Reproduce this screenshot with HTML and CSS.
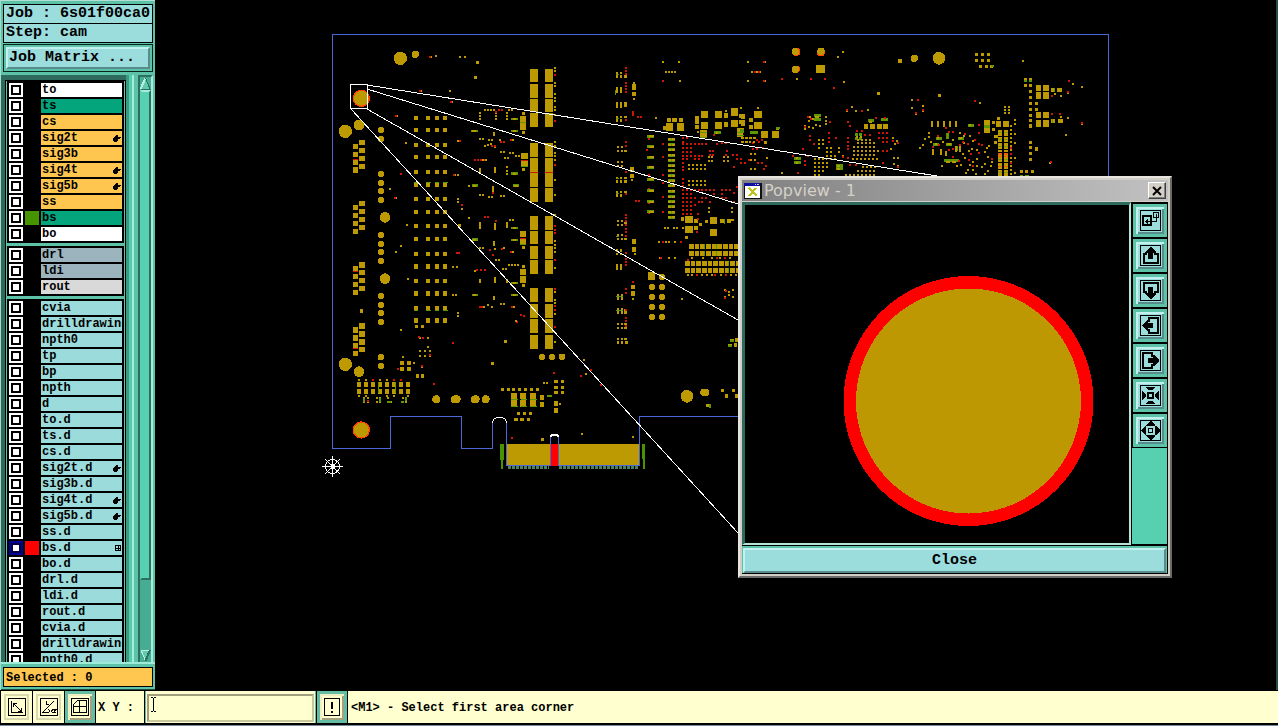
FILE: index.html
```html
<!DOCTYPE html>
<html lang="en">
<head>
<meta charset="utf-8">
<title>6s01f00ca0 - cam</title>
<link rel="stylesheet" href="styles.css">
</head>
<body>
<svg class="defs" aria-hidden="true">
  <symbol id="hand" viewBox="0 0 8 7"><path d="M3 0h2v1H3zM2 1h3v1H2zM1 2h7v1H1zM0 3h7v1H0zM0 4h5v1H0zM0 5h5v1H0zM1 6h3v1H1z"/></symbol>
  <symbol id="grid" viewBox="0 0 6 6"><path d="M.5.5h5v5h-5zM3 0v6M0 3h6" fill="none" stroke="#000"/></symbol>
</svg>
<div class="workspace">
  <aside class="sidebar">
    <div class="info">
      <div class="info-box">Job : 6s01f00ca0</div>
      <div class="info-box">Step: cam</div>
    </div>
    <div class="matrix"><button type="button" class="matrix-button">Job Matrix ...</button></div>
    <div class="browser">
      <div class="layers">
        <ul class="group">
          <li class="row white"><input type="checkbox" id="a1"><span class="swatch"></span><label for="a1">to</label></li>
          <li class="row green"><input type="checkbox" id="a2"><span class="swatch"></span><label for="a2">ts</label></li>
          <li class="row orange"><input type="checkbox" id="a3"><span class="swatch"></span><label for="a3">cs</label></li>
          <li class="row orange"><input type="checkbox" id="a4"><span class="swatch"></span><label for="a4">sig2t<svg class="hand"><use href="#hand"/></svg></label></li>
          <li class="row orange"><input type="checkbox" id="a5"><span class="swatch"></span><label for="a5">sig3b</label></li>
          <li class="row orange"><input type="checkbox" id="a6"><span class="swatch"></span><label for="a6">sig4t<svg class="hand"><use href="#hand"/></svg></label></li>
          <li class="row orange"><input type="checkbox" id="a7"><span class="swatch"></span><label for="a7">sig5b<svg class="hand"><use href="#hand"/></svg></label></li>
          <li class="row orange"><input type="checkbox" id="a8"><span class="swatch"></span><label for="a8">ss</label></li>
          <li class="row green"><input type="checkbox" id="a9"><span class="swatch lime"></span><label for="a9">bs</label></li>
          <li class="row white"><input type="checkbox" id="a10"><span class="swatch"></span><label for="a10">bo</label></li>
        </ul>
        <ul class="group">
          <li class="row slate"><input type="checkbox" id="b1"><span class="swatch"></span><label for="b1">drl</label></li>
          <li class="row slate"><input type="checkbox" id="b2"><span class="swatch"></span><label for="b2">ldi</label></li>
          <li class="row grey"><input type="checkbox" id="b3"><span class="swatch"></span><label for="b3">rout</label></li>
        </ul>
        <ul class="group">
          <li class="row"><input type="checkbox" id="c1"><span class="swatch"></span><label for="c1">cvia</label></li>
          <li class="row"><input type="checkbox" id="c2"><span class="swatch"></span><label for="c2">drilldrawing</label></li>
          <li class="row"><input type="checkbox" id="c3"><span class="swatch"></span><label for="c3">npth0</label></li>
          <li class="row"><input type="checkbox" id="c4"><span class="swatch"></span><label for="c4">tp</label></li>
          <li class="row"><input type="checkbox" id="c5"><span class="swatch"></span><label for="c5">bp</label></li>
          <li class="row"><input type="checkbox" id="c6"><span class="swatch"></span><label for="c6">npth</label></li>
          <li class="row"><input type="checkbox" id="c7"><span class="swatch"></span><label for="c7">d</label></li>
          <li class="row"><input type="checkbox" id="c8"><span class="swatch"></span><label for="c8">to.d</label></li>
          <li class="row"><input type="checkbox" id="c9"><span class="swatch"></span><label for="c9">ts.d</label></li>
          <li class="row"><input type="checkbox" id="c10"><span class="swatch"></span><label for="c10">cs.d</label></li>
          <li class="row"><input type="checkbox" id="c11"><span class="swatch"></span><label for="c11">sig2t.d<svg class="hand"><use href="#hand"/></svg></label></li>
          <li class="row"><input type="checkbox" id="c12"><span class="swatch"></span><label for="c12">sig3b.d</label></li>
          <li class="row"><input type="checkbox" id="c13"><span class="swatch"></span><label for="c13">sig4t.d<svg class="hand"><use href="#hand"/></svg></label></li>
          <li class="row"><input type="checkbox" id="c14"><span class="swatch"></span><label for="c14">sig5b.d<svg class="hand"><use href="#hand"/></svg></label></li>
          <li class="row"><input type="checkbox" id="c15"><span class="swatch"></span><label for="c15">ss.d</label></li>
          <li class="row"><input type="checkbox" id="c16" checked><span class="swatch red"></span><label for="c16">bs.d<svg class="mark"><use href="#grid"/></svg></label></li>
          <li class="row"><input type="checkbox" id="c17"><span class="swatch"></span><label for="c17">bo.d</label></li>
          <li class="row"><input type="checkbox" id="c18"><span class="swatch"></span><label for="c18">drl.d</label></li>
          <li class="row"><input type="checkbox" id="c19"><span class="swatch"></span><label for="c19">ldi.d</label></li>
          <li class="row"><input type="checkbox" id="c20"><span class="swatch"></span><label for="c20">rout.d</label></li>
          <li class="row"><input type="checkbox" id="c21"><span class="swatch"></span><label for="c21">cvia.d</label></li>
          <li class="row"><input type="checkbox" id="c22"><span class="swatch"></span><label for="c22">drilldrawing</label></li>
          <li class="row"><input type="checkbox" id="c23"><span class="swatch"></span><label for="c23">npth0.d</label></li>
        </ul>
      </div>
      <div class="rail"></div>
      <div class="scrollbar">
        <button type="button" class="arrow" aria-label="Scroll up"><svg viewBox="0 0 11 13"><path d="M5.5 1 .5 12.500h10z" fill="#62c9ad"/><path d="M5.500 1 .5 12" stroke="#b4f3e4" fill="none" stroke-width="2"/><path d="M5.500 1 10 12H1" stroke="#2d6f5e" fill="none" stroke-width="1"/></svg></button>
        <div class="thumb"></div>
        <div class="trough"></div>
        <button type="button" class="arrow" aria-label="Scroll down"><svg viewBox="0 0 11 13"><path d="M.5 1h10l-5 11z" fill="#62c9ad"/><path d="M10 1H1l4.500 11" stroke="#b4f3e4" fill="none" stroke-width="1"/><path d="M10 1 5.500 12" stroke="#2d6f5e" fill="none" stroke-width="2"/></svg></button>
      </div>
    </div>
    <div class="selected"><div class="selected-box">Selected : 0</div></div>
  </aside>

  <main class="canvas">
    <svg class="board" width="1123" height="690" viewBox="155 0 1123 690" role="img" aria-label="Board view">
      <!-- upper left quarter, drawn at three units per pixel -->
      <g class="pads" transform="translate(320 25) scale(.33333)">
        <circle class="gold" cx="241" cy="100" r="20"/><circle class="gold" cx="286" cy="88" r="11"/>
        <circle class="hot" cx="124" cy="220" r="26"/><circle class="gold" cx="124" cy="220" r="22"/>
        <circle class="gold" cx="76" cy="319" r="20"/><circle class="gold" cx="117" cy="300" r="16"/><circle class="gold" cx="195" cy="577" r="16"/>
        <path class="w24" d="M642 132V171M642 177V219M642 222V262M642 265V305M642 354V396M642 399V441M642 445V485M642 489V530M642 573V615M642 618V657M642 663V702M642 705V746M642 789V831M642 837V879M642 882V924M642 930V971M687 132V171M687 177V219M687 222V262M687 265V305M687 354V396M687 399V441M687 445V485M687 489V530M687 573V615M687 618V657M687 663V702M687 705V746M687 789V831M687 837V879M687 882V924M687 930V971"/>
        <path class="red w3" d="M630 444h24m21 0h24"/>
        <path id="col" class="w13" d="M288 279h0M288 316h0M288 360h0M288 397h0M288 442h0M288 479h0M288 523h0M288 561h0M288 604h0M288 642h0M288 687h0M288 725h0M288 768h0M288 806h0M288 850h0M288 887h0"/>
        <use href="#col" x="37"/><use href="#col" x="63"/><use href="#col" x="88"/>
        <path class="green w3" d="M281 473h14m23 0h14m12 0h14m12 0h14M281 856h14m23 0h14m12 0h14m12 0h14"/>
        <path class="w19 rnd" d="M183 315h0M183 342h0M183 447h0M183 474h0M183 498h0M183 525h0M183 630h0M183 657h0M183 681h0M183 708h0M183 813h0M183 840h0M183 864h0M183 891h0M183 997h0M183 1023h0"/>
        <path class="w16" d="M126 353h0M126 377h0M126 401h0M126 424h0M107 364h0M107 388h0M107 412h0M107 435h0M126 536h0M126 560h0M126 584h0M126 608h0M107 548h0M107 572h0M107 596h0M107 619h0M126 720h0M126 742h0M126 766h0M126 790h0M107 731h0M107 754h0M107 778h0M107 802h0M126 903h0M126 927h0M126 951h0M126 973h0M107 915h0M107 939h0M107 962h0M107 985h0"/>
        <path class="red w3" d="M99 403h15M99 739h15M99 970h15"/>
        <path class="w10" d="M472 112h0M466 157h0M124 858h0M610 266h0M610 322h0M610 434h0M419 602h0M556 949h0M517 1015h0M610 667h0M610 725h0M610 781h0"/>
        <path class="w6" d="M333 96h0M348 93h0M420 96h0M435 96h0M303 198h0M390 198h0M395 232h0M230 272h0M258 354h0M210 492h0M228 519h0M261 600h0M243 663h0M228 681h0M264 762h0M243 915h0M480 265h0M480 274h0M480 283h0M495 255h0M504 255h0M513 255h0M522 255h0M528 263h0M528 272h0M528 283h0M560 265h0M560 274h0M560 283h0M567 255h0M576 255h0M480 342h0M490 343h0M508 345h0M517 345h0M539 346h0M495 363h0M505 361h0M514 357h0M524 366h0M543 381h0M551 381h0M569 384h0M578 384h0M588 393h0M597 393h0M555 399h0M565 399h0M480 511h0M489 511h0M508 516h0M517 516h0M543 513h0M551 513h0M413 348h0M405 450h0M414 450h0M414 522h0M414 531h0M425 551h0M447 483h0M447 579h0M561 427h0M561 437h0M561 446h0M399 726h0M411 726h0M399 810h0M408 810h0M414 864h0M414 873h0M567 720h0M576 720h0M585 720h0M594 720h0M549 732h0M558 732h0M528 705h0M537 705h0M543 837h0M552 837h0M480 669h0M489 669h0M570 584h0M579 584h0M505 841h0M516 847h0"/>
        <path class="w6" d="M705 129h0M705 138h0M705 174h0M705 183h0M705 207h0M705 219h0M705 228h0M705 246h0M705 255h0M705 270h0M705 351h0M705 363h0M705 384h0M705 393h0M705 405h0M705 465h0M705 510h0M705 570h0M705 648h0M705 660h0M705 670h0M705 681h0M705 729h0M705 801h0M705 825h0M705 835h0M705 868h0M705 951h0"/>
        <path class="w6 red" d="M330 96h0M299 198h0M393 230h0M227 272h0M243 447h0M224 519h0M420 348h0M402 450h0M705 151h0M705 289h0M705 421h0M705 603h0M705 615h0M705 624h0M705 705h0M705 792h0M705 843h0M705 855h0M705 906h0M537 254h0M546 254h0M529 260h0M543 350h0M551 350h0M516 363h0M524 363h0M466 405h0M475 405h0M484 405h0M494 405h0M518 503h0M425 541h0M495 576h0M504 577h0M528 588h0M412 684h0M418 685h0M399 955h0M342 1077h0M470 735h0M482 735h0M495 735h0M510 674h0M518 690h0M547 672h0M572 681h0M480 846h0M487 846h0M575 846h0M604 870h0M612 872h0M590 892h0M573 345h0"/>
        <path class="w6" d="M480 431v12M526 429v12M522 323v8M519 487v10M480 593v16M526 597v14M560 593v14M521 650v10M480 764v8M526 759v12M560 764v8M521 815v8M553 670h0M578 345h0M498 405h0M488 405h0M466 737h0M524 673h0M580 681h0M492 846h0M582 846h0M588 888h0"/>
        <path class="w8 green" d="M456 319h14M578 283h12M578 319h12M459 482h12M582 482h12M578 446h12M459 644h12M578 610h12M578 645h12M578 775h12M578 810h12M459 811h12"/>
        <path class="w6" d="M460 319h4M582 283h4M582 319h4M462 482h4M586 482h4M582 446h4M462 644h4M582 610h4M582 645h4M582 775h4M582 810h4M462 811h4"/>
        <path class="w18" d="M601 283h17M601 305h17M604 393h19M604 415h19M601 627h17M601 650h17M601 741h17M601 764h17"/>
        <path class="w3 red" d="M604 406h19M601 641h17"/><path class="w3 green" d="M601 294h17M604 425h19M601 659h17"/>
      </g>
      <!-- lower left -->
      <g class="pads" transform="translate(320 200) scale(.33333)">
        <circle class="gold" cx="195" cy="52" r="16"/><circle class="gold" cx="195" cy="236" r="16"/>
        <circle class="gold" cx="76" cy="493" r="20"/><circle class="gold" cx="117" cy="515" r="16"/>
        <circle class="hot" cx="124" cy="690" r="26"/><circle class="gold" cx="124" cy="690" r="22"/>
        <path class="w24 rnd" d="M349 598h0M405 598h5M465 598h2M497 598h0"/><path class="w19 rnd" d="M666 471h0M696 471h0M726 471h0"/>
        <path class="w12" d="M117 552v3m0 18v3M138 552v3m0 18v3M159 552v3m0 18v3M180 552v3m0 18v3M201 552v3m0 18v3M222 552v3m0 18v3M243 552v3m0 18v3M264 552v3m0 18v3"/>
        <path class="w12" d="M246 490h1M267 490h0M246 507h1M267 507h0M666 592v2M666 613v2M708 609v4M708 631v2"/>
        <path class="w10" d="M290 379h0M307 379h0M292 528h0M307 528h0M547 568h0M565 568h0M581 568h0M599 568h0M616 568h0M634 568h0M652 568h0M595 640h0M613 640h0M631 640h0M588 658h0M606 658h0M625 658h0M708 544h0M727 544h0M708 562h0M727 562h0M708 577h0M727 577h0M667 718h0"/>
        <path class="w19" d="M574 588h18M601 588h18M629 588h18M574 611h18M601 611h18M629 611h18"/>
        <path class="w3 green" d="M574 599h20m8 0h20m8 0h20M574 620h20m8 0h20m8 0h20M175 546v34M228 546v34"/>
        <path class="w6" d="M117 541h0M138 539h0M180 541h0M201 539h0M117 588h0M138 588h0M201 588h0M222 588h0M264 588h0M132 595h0M132 605h0M144 595h0M144 605h0M171 595h0M180 595h0M171 605h0M180 605h0M205 595h0M213 605h0M250 595h0M258 605h0M249 471h0M282 489h0M300 414h0M324 414h0M324 441h0M300 453h0M315 453h0M330 453h0M300 468h0M315 468h0M330 468h0M306 500h0M672 549h0M681 549h0M719 612h0"/>
        <path class="w6 red" d="M297 411h0M309 413h0M159 539h0M222 541h0M243 539h0M234 508h0M576 714h0M702 520h0M306 497h0M330 466h0M144 603h0"/>
        <path class="w6 green" d="M205 605h6M246 605h4M132 597v6M180 597v6M258 595v6M685 587h8"/>
      </g>
      <!-- middle column and the region left of the pop-up -->
      <g class="pads" transform="translate(560 30) scale(.33333)">
        <path class="w7" d="M172 129h0M172 140h0M184 129h0M184 140h0M172 175v10M184 175v10M172 219v12M184 219v12M172 261h0M184 261h0M172 272h0M184 272h0M197 261h0M197 140h0M197 219v8M174 351h0M186 351h0M174 363h0M186 363h0M197 363h0M174 396h0M186 396h0M174 408h0M186 408h0M172 444h0M184 444h0M197 444h0M172 455h0M184 455h0M197 455h0M172 486h0M184 486h0M172 497h0M184 497h0M197 486h0M174 573h0M186 573h0M174 585h0M186 585h0M197 579h0M174 615h0M186 615h0M174 627h0M186 627h0M197 627h0M172 662h0M184 662h0M172 672h0M184 672h0M172 706v10M184 706v10M174 796v10M186 796v10M174 838v10M186 838v10M197 840v8M174 882h0M186 882h0M197 882h0M174 894h0M186 894h0M197 894h0M174 927h0M186 927h0M197 927h0M174 938h0M186 938h0M200 938h0"/>
        <path class="w6 red" d="M197 114h0M197 123h0M197 132h0M197 159h0M197 168h0M197 177h0M197 186h0M197 270h0M219 246v8M234 261h0M243 261h0M197 337h0M197 347h0M197 427h0M197 492h0M228 513h0M237 513h0M197 556h0M197 565h0M197 573h0M197 585h0M197 596h0M197 606h0M197 617h0M197 668h0M197 688h0M197 697h0M197 706h0M219 757h0M197 777h0M197 790h0M197 841h0M197 865h0M197 874h0M197 888h0M310 153h0M267 326h0M309 342h0M261 359h0M264 380h0M309 380h0M309 436h0M309 460h0M309 500h0M309 545h0M267 436h0M267 478h0M267 520h0M267 550h0"/>
        <path class="w3 green" d="M168 134h10M168 180v14M168 266h10M168 447h10M168 490h10M168 620h10M168 800h20M168 842h20"/>
        <path class="w12" d="M222 169v5M222 191v1M217 417v2M217 437v2M223 634v2M223 656v3M219 770v2M219 790v2"/>
        <path class="w6" d="M222 160h0M222 207h0M216 449h0M225 672h0M219 806h0M288 264h0M309 96h0M357 96h0M360 153h0M318 126h0M327 126h0M336 126h0M345 126h0M564 96h0M564 153h0M576 126h0M315 594h0M324 594h0M342 594h0M351 594h0M368 594h0M377 594h0M297 636h0M318 636h0M327 636h0M345 636h0M300 684h0M327 684h0M345 684h0M366 807h0M72 990h0M78 1032h0M63 1037h0M66 1212h0M219 1221h0M517 569h0"/>
        <path class="w9 green" d="M266 319h12M266 350h12M266 382h12M266 412h12M266 448h12M266 482h12M266 515h12M266 545h12M467 308h12M577 308h12"/>
        <path class="w6" d="M270 319h8M270 350h8M270 382h8M270 412h8M270 448h8M270 482h8M270 515h8M270 545h8M470 308h0M580 308h0"/>
        <path class="w9 green" d="M328 328h13M328 344h13M328 360h13M328 376h13M328 391h13M328 407h13M328 422h13M328 437h13M328 453h13M328 468h13M328 484h13M328 500h13M328 516h13M328 531h13M328 547h13M328 562h13"/>
        <path class="w6" d="M328 328h2m8 0h4M328 344h2m8 0h4M328 360h2m8 0h4M328 376h2m8 0h4M328 391h2m8 0h4M328 407h2m8 0h4M328 422h2m8 0h4M328 437h2m8 0h4M328 453h2m8 0h4M328 468h2m8 0h4M328 484h2m8 0h4M328 500h2m8 0h4M328 516h2m8 0h4M328 531h2m8 0h4M328 547h2m8 0h4M328 562h2m8 0h4"/>
        <path class="w20" d="M329 289v3M362 289v3M433 253h1M433 286h1M475 253h1M475 286h1M525 246v3M525 280v1M592 253v2M592 286h1M386 569h3M386 600h3M460 573h1M460 607h1"/>
        <path class="w12" d="M343 270h2M362 270h0M328 271h0M316 295h0M411 264h0M411 275h0M411 291h0M498 256v2M498 282v3M548 258v2M548 280v3M573 269h0M573 290h0M426 307h8M426 316h8M409 573h0M409 593h0M486 574h0M506 574h0M536 300h10M538 314h6"/>
        <path class="w10" d="M367 567h0M379 622h0M439 575h0M421 583h0"/><path class="w6" d="M498 243h0M543 235h0M594 235h0M413 307h0M519 569h0"/>
        <path class="w3 green" d="M420 308h20M420 322h20M530 308h22M530 316h22M495 567v14"/>
        <path class="red dots" d="M368 325h0M380 325h0M368 336h0M368 343h0M380 343h0M393 343h0M404 343h0M416 343h0M427 343h0M438 343h0M380 355h0M393 355h0M368 355h0M368 366h0M380 366h0M393 366h0M380 377h0M393 377h0M404 377h0M416 377h0M427 377h0M368 377h0M368 388h0M380 388h0M404 388h0M416 388h0M368 399h0M368 410h0M368 421h0M368 447h0M368 458h0M368 469h0M368 480h0M380 480h0M393 480h0M404 480h0M416 480h0M427 480h0M438 480h0M368 492h0M380 492h0M393 492h0M368 504h0M380 504h0M393 504h0M404 504h0M427 504h0M438 504h0M368 516h0M380 516h0M393 516h0M416 516h0M427 516h0M368 528h0M380 528h0M393 528h0M368 540h0M380 540h0M393 540h0M368 551h0M380 551h0M393 551h0M413 551h0M404 525h0M449 363h0M460 363h0M486 340h0M498 340h0M500 364h0M460 375h0M449 376h0M498 375h0M520 375h0M532 375h0M543 387h0M531 387h0M555 399h0M543 399h0M522 410h0M486 480h0M498 480h0M510 480h0M486 492h0M486 504h0M498 504h0M522 490h0M522 516h0M450 480h0M462 480h0M462 492h0M450 516h0M532 470h0M579 340h0M590 330h0M472 341h0M462 315h0M567 390h0M411 606h0M413 568h0M309 636h0M362 636h0M304 684h0"/>
        <path class="w6" d="M387 405h0M398 405h0M411 405h0M423 405h0M435 405h0M387 417h0M398 417h0M411 417h0M423 417h0M435 417h0M387 453h0M398 453h0M411 453h0M423 453h0M435 453h0M387 465h0M398 465h0M411 465h0M423 465h0M435 465h0M447 382h0M456 382h0M447 393h0M456 393h0M492 382h0M503 382h0M492 393h0M503 393h0M447 534h0M447 546h0M516 534h0M516 546h0M549 325h0M561 325h0M573 325h0M585 325h0M549 337h0M561 337h0M573 373h0M585 373h0M573 390h0M573 417h0M585 417h0"/>
        <path class="w14" stroke-dasharray="14 3" d="M387 649h147M387 671h147M375 701h159M375 721h159"/>
        <path class="w3 green" d="M435 642v14m0 8v14M470 642v14m0 8v14M506 695v13m0 6v14"/>
        <path class="w6" d="M383 736h0M395 736h0M425 736h0M440 736h0M455 736h0M482 736h0M513 736h0M528 736h0M397 684h0M430 684h0M456 684h0M480 684h0M510 684h0M495 780h0M507 785h0M519 780h0M495 800h0M507 796h0M519 800h0"/>
        <path class="w6 red" d="M410 736h0M465 736h0M498 736h0M384 691h0M470 684h0M495 684h0M497 782h0M495 803h0"/>
        <path class="w20" d="M274 738v2"/><path class="w19 rnd" d="M306 740h0M276 771h0M306 771h0M276 801h0M306 801h0M276 831h0M306 831h0M276 861h0M306 861h0M5 981h2"/>
        <circle class="gold" cx="381" cy="1099" r="19"/><path class="w22 rnd" d="M432 1087h5"/>
        <path class="w10" d="M487 1081h0M520 1081h0M499 1098h0M531 1098h0M443 1127h3M516 931h0M530 930h0M510 946h0M527 945h0M7 1054h0M7 1072h0M7 1087h0"/>
        <path class="w6 green" d="M451 1124v6M514 932h6M506 947h6"/><path class="w6 red" d="M94 1019h0M124 1064h0M63 1037h0"/>
      </g>
      <!-- upper right -->
      <g class="pads" transform="translate(740 30) scale(.33333)">
        <circle class="hot" cx="169" cy="66" r="12"/><circle class="gold" cx="166" cy="65" r="11"/><circle class="hot" cx="243" cy="67" r="12"/><circle class="gold" cx="243" cy="64" r="11"/><circle class="hot" cx="169" cy="118" r="11"/><circle class="gold" cx="166" cy="118" r="11"/>
        <path class="w24" d="M228 117h27"/><circle class="gold" cx="597" cy="85" r="19"/><circle class="gold" cx="523" cy="85" r="11"/><path class="w12" d="M479 93h1"/>
        <path class="w10" d="M709 73h0M727 73h0M745 73h0M709 91h0M727 91h0M745 91h0M721 109h0M739 109h0M755 109h0M415 190h0M598 196h0M856 150h0M871 150h0M856 166h0M871 166h0M871 184h0M871 202h0M871 220h0M889 220h0M871 238h0M889 238h0M871 256h0M871 271h0M871 288h0M871 337h0M871 352h0M889 357h0M871 370h0M871 388h0M844 424h0M860 424h0M877 424h0M775 265h0M760 277h0M760 298h0M768 320h0M766 337h0M76 337h0M113 295h0"/>
        <path class="w6 green" d="M755 109h4M854 152h4m11 0h4M110 295h6"/>
        <path class="w18" d="M888 174h15M909 174h18M888 197h15M909 197h18M888 256h15M909 256h18M888 281h15M909 281h18M732 279h18M732 300h18M768 282h15M789 282h17"/>
        <path class="w12" d="M939 180h1M957 180h3M939 273h1M960 273h2"/><path class="w4 green" d="M943 174v12M938 267v12M732 287h18M732 291h18"/>
        <path class="w22" d="M43 254h22M43 286h22M63 313h20M96 313h20"/><path class="w12" d="M3 259h5M3 276h5M33 270h0M33 290h0"/>
        <path class="w6" d="M24 96h0M24 153h0M75 96h0M75 153h0M36 126h0M51 127h0M60 127h0M294 81h0M309 66h0M171 147h0M312 156h0M849 93h0M999 162h0M1026 171h0M984 264h0M978 315h0M516 210h0M516 233h0M549 228h0M705 213h0M720 218h0M336 231h0M348 243h0M384 240h0M366 244h0M321 243h0M54 234h0M963 199h0M945 193h0M984 190h0M963 260h0M1026 283h0M528 251h0M548 244h0M209 261h0M219 268h0M207 272h0M195 288h0M195 298h0M207 290h0M219 295h0M228 285h0M240 289h0M258 262h0M258 272h0M258 283h0M126 429h0M81 384h0M931 398h0M795 232h0M807 232h0M795 241h0M807 241h0M795 250h0M807 250h0"/>
        <path class="w6 red" d="M72 97h0M72 153h0M45 127h0M57 127h0M127 147h0M214 147h0M256 147h0M283 174h0M988 153h0M984 187h0M960 252h0M935 252h0M1026 280h0M932 396h0M706 212h0M533 210h0M549 240h0M528 249h0M366 243h0M320 239h0M205 260h0M213 268h0M195 292h0M935 197h0M716 285h0"/>
        <path class="w9 green" d="M226 257h12M226 268h12M388 272h10M427 269h12M35 308h10M166 385h12M166 398h12M293 407h11M293 417h11M3 303h4M350 314h0M362 314h0M350 325h0M362 325h0M689 286h10M593 325h10M585 343h8M622 343h11M659 325h10M622 314v8M650 354v6M616 392h36"/>
        <path class="w6" d="M228 262h6M390 276h4M170 385h0M170 398h0M294 407h4M294 417h4M350 320h0M362 320h0M690 286h0M595 325h0M587 343h0M625 343h4M660 325h4M622 396h6M640 396h6"/>
        <path class="w14" d="M372 290h12M390 290h14M412 290h13M429 290h15"/>
        <path class="w6" d="M576 276v12M594 276v12M612 276v12M630 276v12M648 276v12M580 360v12M602 360v12M617 366v8M648 352v10M661 352v10"/>
        <path class="bars" d="M780 300v137M798 300v137"/>
        <path class="bars-green" d="M774 309h12m6 0h12M774 329h12m6 0h12M774 349h12m6 0h12M774 389h12m6 0h12M774 429h12m6 0h12"/>
        <path class="w4 hots" d="M774 372h12m6 0h12M774 380h12m6 0h12M774 410h12m6 0h12"/>
        <path class="dashes" d="M813 284v151M825 268v18M825 310v12M825 425v12"/>
        <path class="dashes" d="M222 387h38M222 399h42M222 411h42M222 423h30M222 435h18M258 354h18M258 366h18M258 378h30M270 386h18M340 352h66M340 364h78M340 376h66M336 386h78M350 340h54M350 330h42M366 411h42M350 423h54M316 435h90M234 330h18M234 342h18M234 354h6M295 354h6M295 366h6M307 378h6M3 324h43M3 336h43M30 373h18M30 390h18M30 417h18"/>
        <path class="red dots" d="M270 276h0M267 310h0M267 324h0M267 336h0M288 324h0M324 276h0M330 289h0M324 324h0M324 336h0M324 348h0M324 358h0M324 385h0M350 303h0M366 303h0M374 316h0M416 310h0M428 310h0M440 310h0M418 324h0M430 324h0M442 324h0M428 336h0M442 336h0M390 316h0M442 364h0M430 364h0M310 382h0M348 404h0M330 404h0M210 330h0M210 318h0M222 342h0M205 378h0M196 392h0M196 404h0M174 429h0M190 358h0M58 336h0M66 330h0M40 358h0M52 357h0M70 355h0M54 398h0M66 398h0M78 408h0M72 417h0M3 387h0M15 399h0M3 399h0M160 378h0M430 400h0M408 265h0M435 265h0"/>
        <path class="dots" d="M459 325h0M471 333h0M465 343h0M453 358h0M462 384h0M474 384h0M474 408h0M462 402h0M541 353h0M549 346h0M555 328h0M568 308h0M566 322h0M573 336h0M660 310h0M673 318h0M690 318h0M700 332h0M640 330h0M610 336h0M672 340h0M668 372h0M676 384h0M687 364h0M697 357h0M712 360h0M735 366h0M741 354h0M747 348h0M744 380h0M712 386h0M700 396h0M690 404h0M727 412h0M735 402h0M757 396h0M753 408h0M710 408h0M700 420h0M684 420h0M678 429h0M708 433h0M734 432h0M744 422h0M606 408h0M652 408h0M664 404h0M824 385h0M824 340h0"/>
        <path class="red dots" d="M618 295h0M626 307h0M640 306h0M595 318h0M668 337h0M684 342h0M705 330h0M718 310h0M717 342h0M725 345h0M675 313h0M660 346h0M640 356h0M626 360h0M640 380h0M694 372h0M718 368h0M657 394h0M688 390h0M757 388h0M700 408h0M813 355h0M813 372h0M813 400h0M474 338h0M460 332h0M474 410h0M598 345h0M580 350h0"/>
        <path class="w4 green" d="M840 437h8m8 0h10"/>
      </g>

      <!-- card edge -->
      <path fill="#be9a02" d="M507 444h132v21H507z"/><path fill="#f00" d="M551 444h7v22h-7z"/>
      <path fill="#489400" d="M500 444h4v16h-1v9h-2v-9h-1zM642 444h3v25h-2v-10h-1z"/>
      <path d="M508 467.500h41M559 467.500h80" stroke="#4a8263" stroke-width="3" stroke-dasharray="3 1"/>
      <path class="outline" d="M332.500 448V34.500H1108.500V416.500H639.500V465.500H558.500V436M550.500 436V465.500H506.500V423M492.500 423V448.500H461.500V416.500H390.500V448.500H332"/>
      <path class="trace" stroke-width="1" d="M492.500 423C493 415 506 415 506.500 423"/><path class="trace" stroke-width="2" d="M551 437c0-3 7-3 7 0"/>
      <path class="trace" d="M350.500 84.500h17v24h-17zM367 85 937 176M367 89 738 204M367 109 738 320M351 109 738 533"/>
      <g class="trace"><circle cx="332.500" cy="466.500" r="7"/><path d="M322 466.500h21M332.500 456v21M325 459l15 15M340 459l-15 15"/><path d="M330.500 466.500h4M332.500 464v5" stroke-width="3"/></g>
    </svg>

    <section class="popview" aria-label="Popview - 1">
      <header class="title">
        <svg class="app" viewBox="0 0 18 16"><path fill="#111" d="M0 0h18v16H0z"/><path fill="#fff" d="M1 3h15v12H1z"/><path fill="#1010a0" d="M0 0h16v3H0z"/><path fill="#ccc" d="M11 1h1v1h-1zM13 1h2v1h-2z"/><path d="M5 5l8 8M12 5l-7 8" stroke="#bcc418" stroke-width="2"/></svg>
        <h1>Popview - 1</h1>
        <button type="button" class="close-x" aria-label="Close window"><svg viewBox="0 0 10 10"><path d="M1 1l8 8M9 1L1 9" stroke="#000" stroke-width="2"/></svg></button>
      </header>
      <div class="pop-body">
        <div class="view"><svg viewBox="0 0 384 338" role="img" aria-label="Magnified pad"><circle cx="223.500" cy="196" r="125" fill="#f00"/><circle cx="223.500" cy="196" r="112.500" fill="#be9802"/></svg></div>
        <div class="tools">
          <button type="button" aria-label="Copy view"><svg viewBox="0 0 21 21"><path class="f" d="M.5.5h20v20H.5z"/><path class="b" d="M3 6h8v9H3z"/><path class="f" d="M13.500 2.500h5v5h-5zM15.500 4.500h1v7H5M7.500 9v5M6.500 10v3"/></svg></button>
          <button type="button" aria-label="Pan up"><svg viewBox="0 0 21 21"><path class="f" d="M.5.5h20v20H.5z"/><path class="b" d="M7 9H4v9h14V9h-4"/><path d="M10 2h1l5 5v1h-3v6H8V8H5V7z"/></svg></button>
          <button type="button" aria-label="Pan down"><svg viewBox="0 0 21 21"><path class="f" d="M.5.5h20v20H.5z"/><path class="b" d="M7 12H4V3h14v9h-4"/><path d="M10 19h1l5-5v-1h-3V7H8v6H5v1z"/></svg></button>
          <button type="button" aria-label="Pan left"><svg viewBox="0 0 21 21"><path class="f" d="M.5.5h20v20H.5z"/><path class="b" d="M9 7V3h9v15H9v-4"/><path d="M2 10v1l5 5h1v-3h5V8H8V5H7z"/></svg></button>
          <button type="button" aria-label="Pan right"><svg viewBox="0 0 21 21"><path class="f" d="M.5.5h20v20H.5z"/><path class="b" d="M12 7V3H3v15h9v-4"/><path d="M19 10v1l-5 5h-1v-3H8V8h5V5h1z"/></svg></button>
          <button type="button" aria-label="Zoom in"><svg viewBox="0 0 21 21"><path class="f" d="M.5.5h20v20H.5z"/><path class="b" d="M8 8h5v5H8z"/><path d="M5 2h11l-4 3h-3zM5 19h11l-4-3h-3zM2 5v11l4-5v-1zM19 5v11l-4-5v-1z"/></svg></button>
          <button type="button" aria-label="Zoom out"><svg viewBox="0 0 21 21"><path class="f" d="M.5.5h20v20H.5zM8.500 8.500h4v4h-4z"/><path d="M10 1h1l4 4v1H6V5zM10 20h1l4-4v-1H6v1zM1 10v1l4 4h1V6H5zM20 10v1l-4 4h-1V6h1z"/></svg></button>
        </div>
      </div>
      <div class="pop-foot"><button type="button" class="close">Close</button></div>
    </section>
  </main>
</div>

<footer class="status">
  <button type="button" class="tool" aria-label="Snap"><svg viewBox="0 0 18 18"><path class="f" d="M.5.5h17v17H.5zM3.500 3v11.500H15M5 5l9 9M5.500 9V5.500H9M13.500 10v3.500H10"/></svg></button>
  <button type="button" class="tool" aria-label="Angle"><svg viewBox="0 0 18 18"><path class="f" d="M.5.5h17v17H.5zM2 14.500h7M3 14 14 3M6.500 3v3h2M7.500 11c2 0 2 2 1.500 3M15.500 11.500h-2l-2 1v1l1 1h1l3-3M14 12l1 2.500h1"/></svg></button>
  <button type="button" class="tool framed" aria-label="Grid"><svg viewBox="0 0 18 18"><path class="f" d="M.5.5h17v17H.5zM6.500 2.500h9v12h-13v-8zM2 8.500h14M8.500 2v13"/></svg></button>
  <label class="xy" for="xy">X Y :</label>
  <div class="entry"><input type="text" id="xy"><svg class="ibeam" viewBox="0 0 7 15"><path class="f" d="M1 .5h2M4 .5h2M3.500 1v13M1 14.500h2M4 14.500h2"/></svg></div>
  <button type="button" class="tool framed" aria-label="Interrupt"><svg viewBox="0 0 18 18"><path class="f" d="M1.500.5h15v17h-15z"/><path d="M8 4h2v7H8zM8 13h2v2H8z"/></svg></button>
  <output class="message">&lt;M1&gt; - Select first area corner</output>
</footer>
</body>
</html>
```
FILE: styles.css
```css
* { box-sizing: border-box; }
body {
  margin: 0;
  height: 100vh;
  display: flex;
  flex-direction: column;
  overflow: hidden;
  background: #000;
  color: #000;
  font: bold 12px/14px "Liberation Mono", monospace;
}
button, input { font: inherit; color: inherit; border-radius: 0; }
button { margin: 0; padding: 0; }
svg { display: block; shape-rendering: crispEdges; }
.defs { position: absolute; width: 0; height: 0; }
.f { fill: none; stroke: #000; stroke-width: 1; }
.b { fill: none; stroke: #000; stroke-width: 2; }

.workspace { flex: 1; min-height: 0; display: flex; }

/* sidebar */
.sidebar {
  flex: none;
  width: 155px;
  display: flex;
  flex-direction: column;
  background: #5cc3a8;
  border-top: 1px solid #b5ded5;
  border-left: 1px solid #9fdccc;
}
.info { padding: 3px 2px 0; font-size: 15px; line-height: 18px; }
.info-box { height: 20px; padding-left: 2px; white-space: nowrap; background: #9bdcdc; border: 1px solid #000; }
.info-box + .info-box { margin-top: -1px; }
.matrix { margin: 1px 2px 0; padding: 2px; border: 1px solid #06251d; }
.matrix-button {
  display: block;
  width: 100%;
  height: 22px;
  padding-left: 1px;
  font-size: 15px;
  text-align: left;
  white-space: nowrap;
  background: #9bdcdc;
  border: 2px solid;
  border-color: #c3f1f0 #588b8b #588b8b #c3f1f0;
}
.browser { flex: 1; min-height: 0; display: flex; margin-top: 3px; border-bottom: 2px solid #9debd8; }
.layers {
  width: 125px;
  display: flex;
  flex-direction: column;
  gap: 3px;
  overflow: hidden;
  border: solid #2f6b5c;
  border-width: 5px 0 0 4px;
  padding: 1px 0 0 2px;
  box-shadow: inset 1px 1px #000, inset -1px 0 #000;
}
.group { flex: none; width: 117px; margin: 0; padding: 2px; list-style: none; display: grid; gap: 2px; background: #000; }
.row { display: grid; grid-template-columns: 14px 14px 1fr; gap: 2px; height: 14px; --fill: #9bdbdb; }
.row.white { --fill: #fff; }
.row.green { --fill: #04a47c; }
.row.orange { --fill: #ffc64f; }
.row.slate { --fill: #9bb4be; }
.row.grey { --fill: #d9d9d9; }
.row input { appearance: none; width: 14px; height: 14px; margin: 0; background: #fff; border: 2px solid #fff; box-shadow: inset 0 0 0 2px #000; }
.row input:checked { border-color: #00009a; box-shadow: inset 0 0 0 2px #000048; }
.swatch.lime { background: #469400; }
.swatch.red { background: #f00; }
.row label {
  display: flex;
  align-items: center;
  min-width: 0;
  overflow: hidden;
  padding: 0 1px;
  background: var(--fill);
}
.hand { width: 8px; height: 7px; margin-left: auto; flex: none; }
.mark { width: 6px; height: 6px; margin-left: auto; flex: none; }
.rail {
  width: 12px;
  background: #54ccb0;
  border-left: 3px solid #3f9880;
  box-shadow: inset -4px 0 #5cc3a8, inset -6px 0 #a5ecdb;
}
.scrollbar {
  width: 15px;
  display: flex;
  flex-direction: column;
  background: #46ac94;
  border: solid;
  border-width: 2px 2px 0;
  border-color: #2d6f5e #a5ecdb #2d6f5e #2d6f5e;
}
.arrow { height: 13px; background: #48ab94; border: 0; }
.arrow svg { width: 11px; height: 13px; }
.thumb { flex: 491; background: #58d0b3; border: 2px solid; border-color: #a5ecdb #2d6f5e #2d6f5e #58d0b3; }
.trough { flex: 70; }
.selected { padding: 3px 2px 2px; border-bottom: 1px solid #1c4a3e; }
.selected-box { height: 20px; padding: 3px 2px; background: #ffc650; border: 1px solid #000; }

/* drawing area */
.canvas { flex: 1; min-width: 0; position: relative; overflow: hidden; background: #000; border-right: 2px solid #284c45; }
.board { position: absolute; left: 0; top: 0; max-width: none; }
.pads path { fill: none; stroke: #be9a02; stroke-linecap: square; }
.gold { fill: #be9a02; }
.hot { fill: #f40; }
.pads .rnd { stroke-linecap: round; }
/* pad centres are single points, so the cap supplies the whole shape */
.w3 { stroke-width: 3; }
.w4 { stroke-width: 4; }
.w6, .dots { stroke-width: 6; }
.w7 { stroke-width: 7; }
.w8 { stroke-width: 7; }
.w9 { stroke-width: 9; }
.w10 { stroke-width: 10; }
.w12 { stroke-width: 12; }
.w13 { stroke-width: 13; }
.w16 { stroke-width: 16; }
.pads .w14, .pads .w18, .pads .w22, .pads .w24, .pads .w3, .pads .w4 { stroke-linecap: butt; }
.w14 { stroke-width: 14; }
.w18 { stroke-width: 19; }
.pads .w19:not(.rnd) { stroke-linecap: butt; }
.pads .w22.rnd, .pads .w24.rnd { stroke-linecap: round; }
.w19 { stroke-width: 19; }
.w20 { stroke-width: 21; }
.w22 { stroke-width: 22; }
.w24 { stroke-width: 24; }
.pads .dashes { stroke-width: 6; stroke-dasharray: 6 6; stroke-linecap: butt; }
.pads .bars { stroke-width: 12; stroke-dasharray: 7 3; stroke-linecap: butt; }
.pads .bars-green { stroke: #7d9a04; stroke-width: 3; stroke-linecap: butt; }
.pads .red { stroke: #d01508; }
.pads .green { stroke: #5d9804; }
.pads .hots { stroke: #f05a08; }
.outline { fill: none; stroke: #4a68d8; }
.trace { fill: none; stroke: #fff; }

/* pop-up window */
.popview {
  position: absolute;
  left: 583px;
  top: 176px;
  width: 434px;
  height: 402px;
  padding: 2px;
  display: flex;
  flex-direction: column;
  background: #d2cec8;
  border: 2px solid;
  border-color: #e8e4de #6c6a68 #6c6a68 #e8e4de;
}
.title {
  flex: none;
  height: 21px;
  margin-bottom: 1px;
  padding: 0 2px;
  display: flex;
  align-items: center;
  background: linear-gradient(90deg, #808080, #c2c2c2);
}
.app { width: 18px; height: 16px; }
.title h1 { flex: 1; margin: 0 0 0 2px; font: 16px/21px "DejaVu Sans", sans-serif; color: #d4d0c8; }
.close-x { width: 18px; height: 17px; padding: 2px 3px; background: #d4d0c8; border: 1px solid; border-color: #fff #404040 #404040 #fff; box-shadow: inset -1px -1px #808080; }
.close-x svg { width: 10px; height: 10px; shape-rendering: auto; }
.pop-body { flex: 1; min-height: 0; display: flex; }
.view { flex: 1; min-width: 0; background: #000; border: solid; border-width: 3px 2px 2px 3px; border-color: #2f6b5c #b2e4d8 #b2e4d8 #2f6b5c; }
.view svg { width: 100%; height: 100%; }
.tools { width: 37px; padding: 2px 0 0 1px; display: flex; flex-direction: column; gap: 2px; border: solid #000; border-width: 0 1px 1px; background: linear-gradient(#000, #000) 0 0 / 100% 246px no-repeat #57d0b2; }
.tools button {
  height: 33px;
  border: 3px solid #5cc3a8;
  background: #9bdcdc;
  box-shadow: inset 2px 2px #c3f1f0, inset -2px -2px #588b8b;
  display: grid;
  place-items: center;
}
.tools svg { width: 21px; height: 21px; }
.pop-foot { height: 29px; padding: 2px 1px 1px; background: #5cc3a8; border: solid #000; border-width: 1px 1px 1px 0; }
.close { display: block; width: 100%; height: 25px; font-size: 15px; background: #9bdcdc; border: 2px solid; border-color: #c3f1f0 #588b8b #588b8b #c3f1f0; }

/* status bar */
.status {
  flex: none;
  height: 36px;
  padding: 1px 0 2px 1px;
  display: flex;
  gap: 1px;
  background: #000;
  border-bottom: 1px solid #7c8b98;
}
.tool {
  flex: none;
  width: 31px;
  display: grid;
  place-items: center;
  background: #ffffcf;
  border: 3px solid #ffffcf;
  box-shadow: inset 0 0 0 2px #d9d9ae;
}
.tool svg { width: 18px; height: 18px; }
.tool.framed { width: 30px; border: 3px solid #62bda4; box-shadow: inset 2px 2px #efefc0, inset -2px -2px #a3a17e; }
.xy { width: 48px; padding: 10px 2px; background: #ffffcf; white-space: nowrap; }
.entry { position: relative; width: 171px; padding: 3px 1px 1px; background: #ffffcf; border-left: 1px solid #62bda4; border-right: 1px solid #62bda4; }
.entry input { width: 100%; height: 100%; padding: 0 4px; background: #ffffcf; border: 2px solid; border-color: #a09e7c #c9c79e #c9c79e #a09e7c; outline: 0; }
.ibeam { position: absolute; left: 4px; top: 6px; width: 7px; height: 15px; }
.message { flex: 1; padding: 10px 3px; background: #ffffcf; }
```
